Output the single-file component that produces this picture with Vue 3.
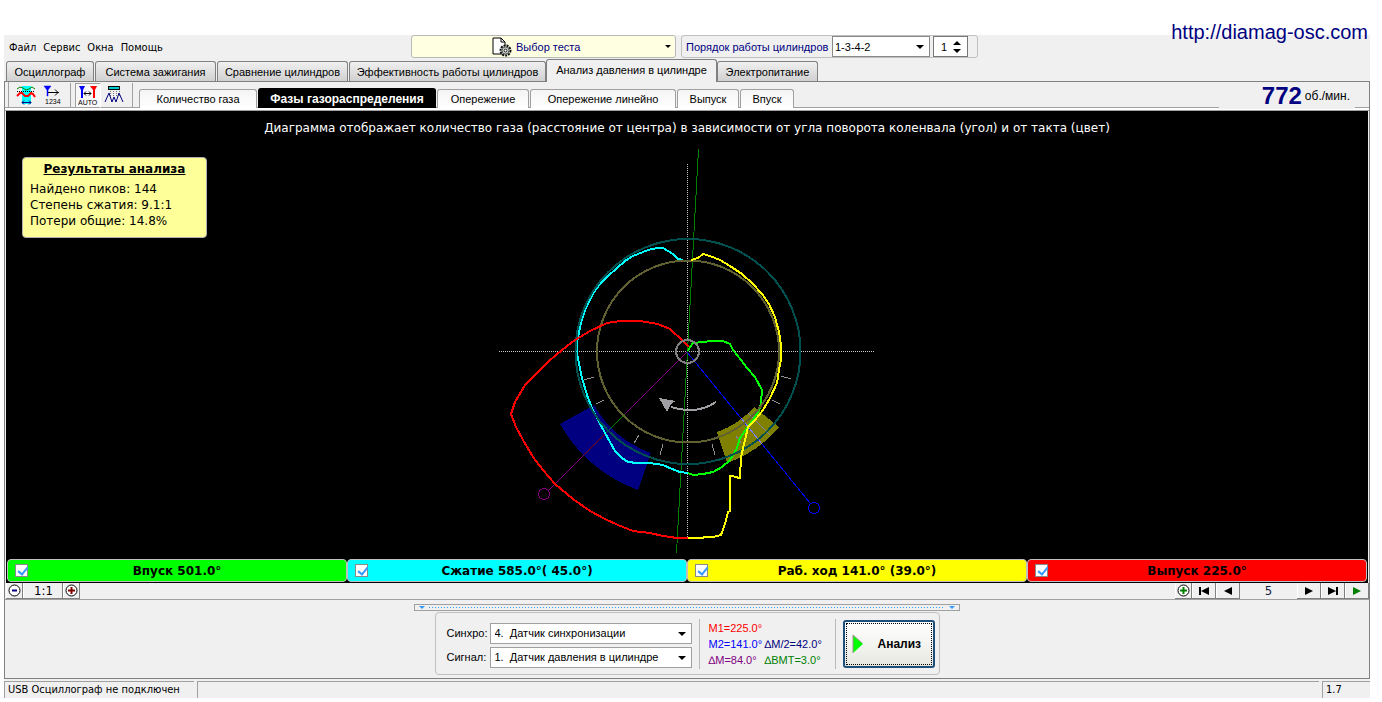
<script setup>
import { ref } from 'vue'

const menu = ['Файл', 'Сервис', 'Окна', 'Помощь']

const mainTabs = [
  { label: 'Осциллограф', size: 'xs' },
  { label: 'Система зажигания', size: 'md' },
  { label: 'Сравнение цилиндров', size: 'lg' },
  { label: 'Эффективность работы цилиндров', size: 'xxl' },
  { label: 'Анализ давления в цилиндре', size: 'xl' },
  { label: 'Электропитание', size: 'sm' },
]
const activeMain = ref(4)

const subTabs = [
  { label: 'Количество газа', size: 'gas' },
  { label: 'Фазы газораспределения', size: 'timing' },
  { label: 'Опережение', size: 'lead' },
  { label: 'Опережение линейно', size: 'linear' },
  { label: 'Выпуск', size: 'out' },
  { label: 'Впуск', size: 'in' },
]
const activeSub = ref(1)

const phases = ref([
  { label: 'Впуск 501.0°', tone: 'green', on: true },
  { label: 'Сжатие 585.0°( 45.0°)', tone: 'cyan', on: true },
  { label: 'Раб. ход 141.0° (39.0°)', tone: 'yellow', on: true },
  { label: 'Выпуск 225.0°', tone: 'red', on: true },
])

const order = ref('1-3-4-2')
const cylinder = ref(1)
const sync = ref('sync')
const signal = ref('pressure')

const ticks = [
  [584, 380, 594, 377], [596, 404, 604, 400], [634, 443, 639, 435], [660, 455, 663, 444],
  [781, 376, 791, 379], [772, 400, 780, 404], [712, 444, 715, 455],
]
</script>

<template>
  <div class="page">
    <a class="site" href="http://diamag-osc.com">http://diamag-osc.com</a>
    <div class="window">
      <header class="top">
        <nav class="menu">
          <button v-for="m in menu" :key="m" type="button">{{ m }}</button>
        </nav>
        <button class="test" type="button">
          <svg class="doc" width="20" height="20" viewBox="0 0 20 20">
            <path d="M1 1H9L13 5V17H1Z" fill="#fff" stroke="#000" />
            <path d="M9 1V5H13" fill="none" stroke="#000" />
            <circle cx="13.5" cy="13.5" r="5" fill="#c4d8c4" stroke="#111" stroke-width="2" stroke-dasharray="2 1" />
            <circle cx="13.5" cy="13.5" r="3.5" fill="#dce8dc" stroke="#555" />
            <circle cx="13.5" cy="13.5" r="1.5" fill="#fff" stroke="#111" />
          </svg>
          <span>Выбор теста</span>
          <i class="caret"></i>
        </button>
        <div class="order">
          <label for="order">Порядок работы цилиндров</label>
          <span class="select order-select">
            <select id="order" v-model="order"><option>1-3-4-2</option><option>1-2-4-3</option></select>
          </span>
          <span class="spin">
            <input v-model="cylinder" type="text" aria-label="Цилиндр" />
            <span class="spin-buttons">
              <button type="button" aria-label="Больше" @click="cylinder++"><i class="up"></i></button>
              <button type="button" aria-label="Меньше" @click="cylinder--"><i class="down"></i></button>
            </span>
          </span>
        </div>
      </header>

      <div class="tabs">
        <button v-for="(t, i) in mainTabs" :key="t.label" type="button" class="tab" :class="[t.size, { active: i === activeMain }]" @click="activeMain = i">{{ t.label }}</button>
      </div>

      <main class="panel">
        <div class="bar">
          <div class="tools">
            <button type="button" aria-label="Сигналы">
              <svg width="20" height="20" viewBox="0 0 20 20">
                <rect x="6" y="1" width="9" height="18" fill="#0ff" />
                <path d="M1 4L4 2L7 3L10 5L13 4L16 2L19 4" fill="none" stroke="#008000" />
                <path d="M1 11L4 8L6 8L9 11H12L15 8L17 9L19 12" fill="none" stroke="#f00" stroke-width="2" />
                <path d="M1 6.500H19" stroke="#000" stroke-dasharray="1 1" />
                <path d="M6 17.500H15M8 15.500L6 17.500L8 19.500M13 15.500L15 17.500L13 19.500" fill="none" stroke="#000080" />
              </svg>
            </button>
            <button type="button" aria-label="Нумерация">
              <svg width="20" height="20" viewBox="0 0 20 20">
                <path d="M2 1H9L6 5V11H5V5Z" fill="#00f" stroke="#00f" stroke-width=".5" />
                <path d="M6 7.500H17M13 4.500L16 7.500L13 10.500" fill="none" stroke="#000" />
                <text x="3" y="19" font-size="7">1234</text>
              </svg>
            </button>
            <span class="divider"></span>
            <button type="button" class="pressed" aria-label="Автоматически">
              <svg width="20" height="20" viewBox="0 0 20 20">
                <path d="M1 1H7L5 5V13H3V5Z" fill="#00f" />
                <path d="M12 1H19L17 5V13H15V5Z" fill="#f00" />
                <path d="M6 8.500H13M8 6.500L6 8.500L8 10.500M11 6.500L13 8.500L11 10.500" fill="none" stroke="#000" />
                <text x="0" y="20" font-size="7">AUTO</text>
              </svg>
            </button>
            <button type="button" aria-label="Пики">
              <svg width="20" height="20" viewBox="0 0 20 20">
                <rect x="4.500" y="1.500" width="11" height="3" fill="#0cc" stroke="#000" />
                <path d="M6.500 6V12M9.500 6V12M12.500 6V12M15.500 6V12" stroke="#777" stroke-dasharray="1 1" />
                <path d="M1 17L5 8L8 17L10 12L12 17L15 8L19 17" fill="none" stroke="#000080" />
              </svg>
            </button>
            <span class="divider"></span>
          </div>
          <div class="subtabs">
            <button v-for="(t, i) in subTabs" :key="t.label" type="button" class="subtab" :class="[t.size, { active: i === activeSub }]" @click="activeSub = i">{{ t.label }}</button>
          </div>
          <div class="rpm"><b>772</b><span>об./мин.</span></div>
        </div>

        <section class="chart">
          <p class="caption">Диаграмма отображает количество газа (расстояние от центра) в зависимости от угла поворота коленвала (угол) и от такта (цвет)</p>
          <svg class="polar" width="376" height="410" viewBox="499 147 376 410" shape-rendering="crispEdges" fill="none">
            <path d="M594 405L560 424A147 147 0 0 0 638 490L651 453A108 108 0 0 1 594 405Z" fill="#000080" />
            <path d="M754 407L779 427A118 118 0 0 1 727 463L717 432A86 86 0 0 0 754 407Z" fill="#808000" />
            <path d="M748 413L770 435M736 436L741 443" stroke="#8080a0" />
            <path v-for="t in ticks" :key="t[0]" :d="`M${t[0]} ${t[1]}L${t[2]} ${t[3]}`" stroke="#909090" />
            <path d="M499 351.500H875M687.500 164V538" stroke="#c8c8c8" stroke-dasharray="1 1" />
            <path d="M698.500 149L676.500 553" stroke="#008000" />
            <path d="M687 352L625 414M584 455L548 491" stroke="#800080" />
            <path d="M625 414L605 434" stroke="#008000" />
            <path d="M605 434L584 455" stroke="#800000" />
            <circle cx="544" cy="494" r="5.500" stroke="#800080" />
            <path d="M687 352L810 503" stroke="#00f" />
            <path d="M741 418L762 444" stroke="#8080ff" />
            <circle cx="814" cy="508" r="5.500" stroke="#00f" />
            <g stroke-width="2">
              <path d="M683 260L678 259L673 254L668 251L663 248H657L648 250L643 252L633 256L625 261L617 268L607 277L600 284L594 292L590 300L585 310L581 322L579 332L577 342V353L579 363L582 378L587 395L592 408L598 420L605 433L610 442L615 451L622 458L628 462L637 463H650L663 465L672 469L680 472L688 473" stroke="#0ff" />
              <path d="M688 351L690 347L693 343L703 342L712 341H723L730 344L733 350L741 360L747 368L755 377L762 390L761 402L760 408L755 417L747 428L740 438L737 448L730 460L722 467L713 472L703 474L693 475L688 473" stroke="#0f0" />
              <circle cx="688" cy="351.500" r="112.500" stroke="#005050" />
              <circle cx="688" cy="351.500" r="91" stroke="#606030" />
              <path d="M691 260L698 258L703 254L710 256L720 260L730 266L742 274L753 284L762 294L769 304L775 317L779 332L781 345V359L779 370L777 383L770 398L763 410L755 420L748 427L745 440L741 457L740 478L735 477L733 476H730V511L728 512L725 524L721 535L713 537H705L702 538H688" stroke="#ff0" />
              <path d="M688 538H677L663 536L650 533L633 531L618 525L605 519L590 511L573 499L555 484L543 470L533 457L523 440L516 427L511 414L515 402L525 385L538 372L549 361L562 350L575 340L590 331L607 323L620 321H640L658 324L670 329L683 341L689 347" stroke="#f00" />
              <circle cx="687.500" cy="351.500" r="11.500" stroke="#808080" />
              <path d="M716 402Q697 415 671 407" stroke="#a0a0a4" />
            </g>
            <path d="M659 398L676 401L671 404L667 412Z" fill="#a0a0a4" />
          </svg>
          <aside class="results">
            <h2>Результаты анализа</h2>
            <p>Найдено пиков: 144</p>
            <p>Степень сжатия: 9.1:1</p>
            <p>Потери общие: 14.8%</p>
          </aside>
        </section>

        <div class="phases">
          <label v-for="p in phases" :key="p.label" class="phase" :class="p.tone">
            <input v-model="p.on" type="checkbox" />
            <span>{{ p.label }}</span>
          </label>
        </div>

        <div class="pager">
          <button type="button" class="flat" aria-label="Уменьшить">
            <svg width="13" height="13" viewBox="0 0 13 13"><circle cx="6.500" cy="6.500" r="5.500" fill="#fff" stroke="#000" /><path d="M4 6.500H9" stroke="#000080" stroke-width="2" /></svg>
          </button>
          <button type="button" class="flat ratio">1:1</button>
          <button type="button" class="flat" aria-label="Увеличить">
            <svg width="13" height="13" viewBox="0 0 13 13"><circle cx="6.500" cy="6.500" r="5.500" fill="#fff" stroke="#000" /><path d="M3 6.500H10M6.500 3V10" stroke="#800000" stroke-width="2" /></svg>
          </button>
          <span class="grow"></span>
          <button type="button" class="flat" aria-label="Добавить">
            <svg width="13" height="13" viewBox="0 0 13 13"><circle cx="6.500" cy="6.500" r="5.500" fill="#fff" stroke="#000" /><path d="M3 6.500H10M6.500 3V10" stroke="#008000" stroke-width="2" /></svg>
          </button>
          <button type="button" class="flat step" aria-label="В начало"><svg width="12" height="8" viewBox="0 0 12 8"><path d="M1 0H3V8H1ZM11 0V8L3 4Z" /></svg></button>
          <button type="button" class="flat step" aria-label="Назад"><svg width="12" height="8" viewBox="0 0 12 8"><path d="M10 0V8L2 4Z" /></svg></button>
          <output class="page-no">5</output>
          <button type="button" class="flat step" aria-label="Вперёд"><svg width="12" height="8" viewBox="0 0 12 8"><path d="M2 0V8L10 4Z" /></svg></button>
          <button type="button" class="flat step" aria-label="В конец"><svg width="12" height="8" viewBox="0 0 12 8"><path d="M1 0V8L9 4ZM9 0H11V8H9Z" /></svg></button>
          <button type="button" class="flat step play" aria-label="Пуск"><svg width="12" height="8" viewBox="0 0 12 8"><path d="M2 0V8L10 4Z" /></svg></button>
        </div>

        <section class="bottom">
          <div class="splitter"><i></i><span></span><i></i></div>
          <div class="controls">
            <div class="fields">
              <label for="sync">Синхро:</label>
              <span class="select"><select id="sync" v-model="sync"><option value="sync">4.&nbsp; Датчик синхронизации</option></select></span>
              <label for="signal">Сигнал:</label>
              <span class="select"><select id="signal" v-model="signal"><option value="pressure">1.&nbsp; Датчик давления в цилиндре</option></select></span>
            </div>
            <div class="marks">
              <span class="m-red">M1=225.0°</span><span></span>
              <span class="m-blue">M2=141.0°</span><span class="m-navy">∆M/2=42.0°</span>
              <span class="m-purple">∆M=84.0°</span><span class="m-green">∆ВМТ=3.0°</span>
            </div>
            <button type="button" class="analyse">
              <svg width="12" height="20" viewBox="0 0 12 20"><path d="M1 1L11 10L1 19Z" fill="#0f0" /><path d="M1 19V1L10 9" fill="none" stroke="#a09090" /></svg>
              <span>Анализ</span>
            </button>
          </div>
        </section>
      </main>

      <footer class="status">
        <span class="s-device">USB Осциллограф не подключен</span>
        <span class="s-info"></span>
        <span class="s-version">1.7</span>
      </footer>
    </div>
  </div>
</template>

<style>
body { background: #fff; }
</style>

<style scoped>
* { box-sizing: border-box; }
.page { position: relative; padding: 35px 12px 4px 4px; font: 11px/14px "Liberation Sans", Arial, sans-serif; color: #000; }
button, input, select { font: inherit; color: inherit; margin: 0; padding: 0; border: 0; border-radius: 0; background: none; }
.site { position: absolute; top: 20px; right: 14px; font-size: 20px; line-height: 24px; color: #000080; text-decoration: none; }
.window { background: #f0f0f0; }

.top { display: flex; align-items: flex-start; height: 24px; }
.menu { flex: 0 0 407px; display: flex; gap: 7px; padding: 6px 0 0 5px; font: 11px/14px "DejaVu Sans Condensed", "DejaVu Sans", sans-serif; }
.test { display: flex; align-items: center; width: 265px; height: 23px; margin-right: 5px; padding: 0 4px 0 80px; gap: 4px; border: 1px solid #b8b8b8; border-radius: 3px; background: #ffffe1; color: #000080; }
.test .caret { margin-left: auto; }
.caret, .down { border: 3px solid transparent; border-top-color: #000; border-bottom: 0; }
.order { display: flex; align-items: center; width: 297px; height: 23px; padding-left: 4px; border: 1px solid #c0c0c0; border-radius: 3px; color: #000080; }
.order label { width: 146px; white-space: nowrap; }
.select { position: relative; display: block; }
.select::after { content: ""; position: absolute; right: 6px; top: 9px; border: 4px solid transparent; border-top-color: #000; border-bottom: 0; pointer-events: none; }
.select select { display: block; width: 100%; height: 21px; padding: 0 18px 0 4px; border: 1px solid #888; background: #fff; color: #000; appearance: none; }
.order-select { width: 98px; }
.order-select select { padding-left: 2px; }
.spin { display: flex; width: 35px; height: 21px; margin-left: 3px; border: 1px solid #777; background: #fff; color: #000; }
.spin input { width: 19px; padding-left: 7px; }
.spin-buttons { display: flex; flex-direction: column; justify-content: center; gap: 4px; }
.spin-buttons button { display: block; line-height: 0; }
.up { display: block; border: 4px solid transparent; border-bottom-color: #000; border-top: 0; }
.spin .down { display: block; border-width: 4px 4px 0; }

.tabs { display: flex; align-items: flex-end; gap: 1px; padding-left: 2px; height: 22px; }
.tab { height: 20px; border: 1px solid #808080; border-bottom: 0; border-radius: 3px 3px 0 0; background: linear-gradient(#f0f0f0, #d0d0d0); white-space: nowrap; }
.tab.active { height: 23px; margin: 0 -1px -1px; padding-bottom: 2px; background: #f0f0f0; position: relative; }
.xs { width: 88px; } .sm { width: 101px; } .md { width: 121px; } .lg { width: 131px; } .xl { width: 171px; } .xxl { width: 197px; }

.panel { border: 1px solid #808080; }
.bar { display: flex; align-items: flex-end; height: 29px; padding-left: 3px; border-bottom: 1px solid #a0a0a0; background: linear-gradient(#a0a0a0, #a0a0a0) 0 25px / 100% 1px no-repeat, linear-gradient(#fff, #fff) 0 26px / 100% 2px no-repeat; }
.tools { display: flex; align-items: center; height: 26px; margin-bottom: 2px; padding-left: 4px; border-left: 1px solid #a0a0a0; }
.tools button { width: 26px; height: 25px; display: flex; align-items: center; justify-content: center; }
.tools .pressed { border: 1px solid #a0a0a0; border-right-color: #fff; background: #f8f8f8; }
.tools text { font-family: "Liberation Sans", sans-serif; }
.divider { width: 1px; height: 24px; background: #a0a0a0; margin: 0 4px 0 5px; }
.subtabs { display: flex; align-items: flex-end; gap: 1px; padding-left: 2px; margin-bottom: 2px; }
.subtab { height: 19px; border: 1px solid #a0a0a0; border-bottom: 0; border-radius: 3px 3px 0 0; background: linear-gradient(#f4f4f4, #fff); white-space: nowrap; }
.subtab.active { height: 20px; background: #000; border-color: #000; color: #fff; font-size: 12px; font-weight: 700; }
.gas { width: 118px; } .timing { width: 178px; } .lead { width: 92px; } .linear { width: 146px; } .out { width: 62px; } .in { width: 54px; }
.rpm { display: flex; align-items: center; justify-content: flex-end; gap: 3px; width: 136px; height: 27px; margin: 0 14px 1px auto; padding-right: 5px; background: #f0f0f0; font-size: 12px; }
.rpm b { font-size: 24px; line-height: 26px; color: #000080; }

.chart { position: relative; margin: 0 1px; padding: 9px 0 2px; background: #000; }
.caption { margin: 0; color: #fff; text-align: center; font: 12px/16px "DejaVu Sans", Verdana, sans-serif; }
.polar { display: block; margin: 11px auto 0; }
.results { position: absolute; left: 16px; top: 46px; width: 185px; height: 81px; padding: 3px 7px; border: 1px solid #b0b0b0; border-radius: 4px; background: #ffff99; font: 12px/16px "DejaVu Sans", Verdana, sans-serif; }
.results h2 { margin: 0 0 4px; font-size: 12px; line-height: 16px; text-align: center; text-decoration: underline; }
.results p { margin: 0; white-space: nowrap; }

.phases { display: grid; grid-template-columns: repeat(4, 1fr); margin: 0 1px; padding: 0 1px 1px; background: #000; }
.phase { display: grid; grid-template-columns: 1fr auto 1fr; align-items: center; height: 23px; padding: 0 7px; border: 1px solid #c0c0c0; border-radius: 4px; font: bold 12px/16px "DejaVu Sans", Verdana, sans-serif; }
.phase input { appearance: none; width: 13px; height: 13px; border: 1px solid #8a8a8a; background: #fff; }
.phase input:checked::after { content: ""; display: block; width: 4px; height: 8px; margin: 0 0 0 4px; border: solid #3399ff; border-width: 0 2px 2px 0; transform: rotate(40deg); }
.green { background: #0f0; } .cyan { background: #0ff; } .yellow { background: #ff0; } .red { background: #f00; }

.pager { display: flex; height: 17px; padding-left: 1px; border-bottom: 1px solid #a0a0a0; font: 13px/16px "DejaVu Sans Condensed", "DejaVu Sans", sans-serif; }
.flat { display: flex; align-items: center; justify-content: center; width: 17px; height: 16px; border: solid #808080; border-width: 0 1px 1px 0; box-shadow: inset 1px 0 #fff; }
.flat.ratio { width: 40px; padding-left: 2px; }
.flat.step { width: 24px; }
.play { fill: #008000; }
.grow { flex: 1; }
.page-no { width: 57px; text-align: center; color: #102040; }

.bottom { display: flex; flex-direction: column; align-items: center; padding: 4px 0 3px; }
.splitter { display: flex; align-items: center; gap: 4px; width: 546px; height: 7px; padding: 0 4px; border: 1px solid #a0a0a0; }
.splitter i { border: 3px solid transparent; border-top-color: #3399ff; border-bottom: 0; }
.splitter span { flex: 1; height: 1px; background: repeating-linear-gradient(90deg, #3399ff 0 1px, transparent 1px 3px); }
.controls { display: flex; align-items: center; width: 505px; height: 63px; margin-top: 1px; padding-left: 11px; border: 1px solid #c0c0c0; border-radius: 4px; }
.fields { display: grid; grid-template-columns: 43px 202px; row-gap: 3px; align-items: center; margin-top: 3px; }
.fields .select select { border-color: #a0a0a0; }
.marks { display: grid; grid-template-columns: 56px auto; height: 50px; width: 137px; margin-left: 7px; padding-left: 9px; border: solid #b8b8b8; border-width: 0 1px; line-height: 16px; align-content: center; white-space: nowrap; }
.m-red { color: #f00; } .m-blue { color: #00f; } .m-navy { color: #000080; } .m-purple { color: #800080; } .m-green { color: #008000; }
.analyse { display: flex; align-items: center; gap: 14px; width: 92px; height: 48px; margin-left: 7px; padding-left: 7px; border: 2px solid #1c4f7c; border-radius: 3px; background: linear-gradient(#fff, #e8e8e2); font-size: 12px; font-weight: 700; outline: 1px dotted #000; outline-offset: -4px; }

.status { display: flex; gap: 3px; padding-top: 2px; font: 11px/16px "DejaVu Sans Condensed", "DejaVu Sans", sans-serif; }
.status span { height: 17px; padding-left: 3px; border: solid #a0a0a0; border-width: 1px 0 0 1px; white-space: nowrap; }
.s-device { width: 190px; } .s-info { flex: 1; } .s-version { width: 48px; }
</style>
